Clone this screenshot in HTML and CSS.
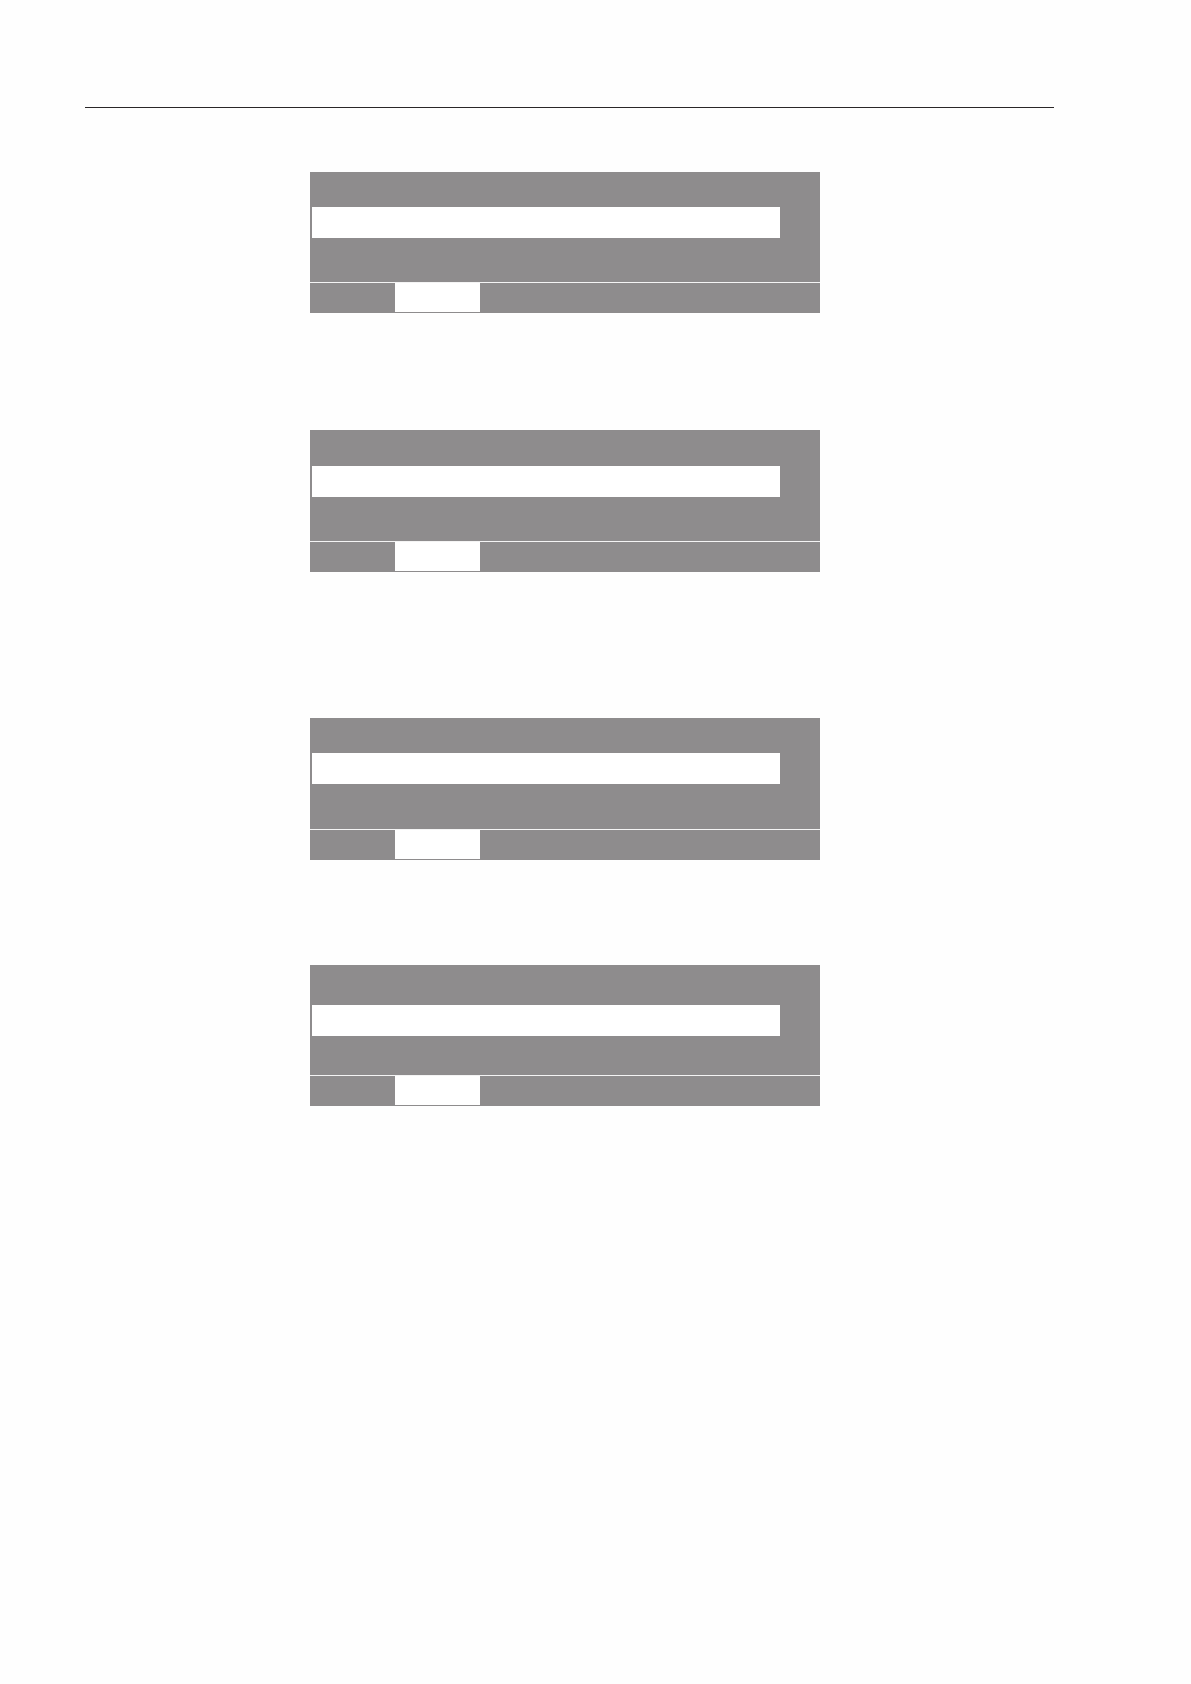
FILE: index.html
```html
<!DOCTYPE html>
<html lang="en">
<head>
<meta charset="utf-8">
<title>Display screens</title>
<link rel="stylesheet" href="styles.css">
</head>
<body>
<div class="page">
  <div class="rule"></div>
  <div class="screens">
    <div class="screen s1">
      <div class="screen-top"><div class="field"></div></div>
      <div class="screen-tabs"><div class="tab"></div><div class="tab active"></div><div class="tab rest"></div></div>
    </div>
    <div class="screen s2">
      <div class="screen-top"><div class="field"></div></div>
      <div class="screen-tabs"><div class="tab"></div><div class="tab active"></div><div class="tab rest"></div></div>
    </div>
    <div class="screen s3">
      <div class="screen-top"><div class="field"></div></div>
      <div class="screen-tabs"><div class="tab"></div><div class="tab active"></div><div class="tab rest"></div></div>
    </div>
    <div class="screen s4">
      <div class="screen-top"><div class="field"></div></div>
      <div class="screen-tabs"><div class="tab"></div><div class="tab active"></div><div class="tab rest"></div></div>
    </div>
  </div>
</div>
</body>
</html>
```

FILE: styles.css
```css
html, body {
  margin: 0;
  padding: 0;
  background: #fefefe;
  font-family: "Liberation Sans", Arial, sans-serif;
}
.page {
  width: 1191px;
  height: 1684px;
  padding-top: 107px;
  box-sizing: border-box;
}
.rule {
  margin-left: 85px;
  width: 969px;
  height: 1px;
  background: #2a2728;
}
.screens {
  display: flex;
  flex-direction: column;
  margin-left: 310px;
  width: 510px;
}
.screen {
  display: flex;
  flex-direction: column;
}
.s1 { margin-top: 64px; }
.s2 { margin-top: 117px; }
.s3 { margin-top: 146px; }
.s4 { margin-top: 105px; }
.screen-top {
  background: #8e8c8d;
  height: 111px;
  padding-top: 35px;
  box-sizing: border-box;
  border-bottom: 1px solid #f4f4f4;
}
.s2 .screen-top { height: 112px; padding-top: 36px; }
.s3 .screen-top { height: 112px; }
.s4 .screen-top { padding-top: 40px; }
.field {
  margin-left: 2px;
  width: 468px;
  height: 31px;
  background: #ffffff;
}
.screen-tabs {
  display: flex;
  height: 30px;
  background: #8e8c8d;
}
.tab {
  width: 85px;
  height: 100%;
}
.tab.active {
  background: #ffffff;
  height: 29px;
}
.tab.rest { flex: 1; }
```
